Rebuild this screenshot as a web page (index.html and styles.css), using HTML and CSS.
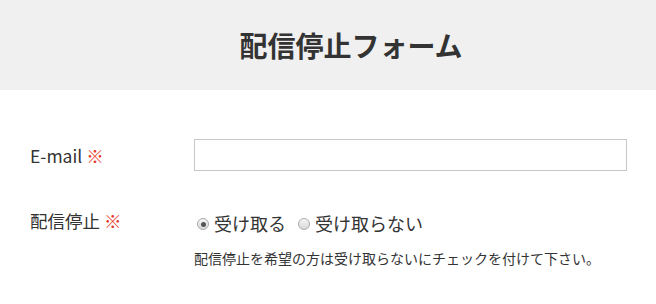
FILE: index.html
```html
<!DOCTYPE html>
<html lang="ja">
<head>
    <meta charset="UTF-8">
    <meta name="viewport" content="width=device-width, initial-scale=1.0">
    <title>配信停止フォーム</title>
    <link rel="stylesheet" href="styles.css">
</head>
<body>
    <div class="page-header">
        <h1>配信停止フォーム</h1>
    </div>
    <form class="form">
        <div class="form-row">
            <label class="form-label" for="email">E-mail <span class="required">※</span></label>
            <div class="form-field">
                <input type="text" id="email" class="text-input">
            </div>
        </div>
        <div class="form-row form-row-top">
            <div class="form-label">配信停止 <span class="required">※</span></div>
            <div class="form-field">
                <div class="radio-group">
                    <label class="radio-item"><input type="radio" name="stop" checked> 受け取る</label>
                    <label class="radio-item"><input type="radio" name="stop"> 受け取らない</label>
                </div>
                <p class="note">配信停止を希望の方は受け取らないにチェックを付けて下さい。</p>
            </div>
        </div>
    </form>
</body>
</html>
```

FILE: styles.css
```css
body {
    font-family: "Noto Sans CJK JP", "Noto Sans", sans-serif;
    margin: 0;
    padding: 0;
    color: #333;
    background: #fff;
}
.page-header {
    background: #f0f0f0;
    height: 90px;
    display: flex;
    align-items: center;
    justify-content: center;
    padding-left: 46px;
}
.page-header h1 {
    margin: 0;
    font-size: 28px;
    font-weight: bold;
    color: #333;
}
.form {
    padding: 49px 29px 0 30px;
}
.form-row {
    display: flex;
    align-items: center;
    margin-bottom: 36px;
}
.form-row-top {
    align-items: flex-start;
}
.form-label {
    width: 164px;
    flex-shrink: 0;
    font-size: 17.5px;
    line-height: 27px;
}
.required {
    color: #e8352a;
}
.form-field {
    flex: 1;
}
.text-input {
    display: block;
    width: 100%;
    height: 32px;
    box-sizing: border-box;
    border: 1px solid #c8c8c8;
    margin: 0;
}
.radio-group {
    display: flex;
    gap: 9px;
    font-size: 18px;
    line-height: 27px;
    padding-top: 3px;
}
.radio-item {
    display: flex;
    align-items: center;
}
.radio-item input {
    appearance: none;
    -webkit-appearance: none;
    box-sizing: border-box;
    width: 12px;
    height: 12px;
    margin: 1px 5px 0 3px;
    border: 1px solid #aaa;
    border-radius: 50%;
    background: linear-gradient(#f6f6f6, #d8d8d8);
    position: relative;
}
.radio-item input:checked::after {
    content: "";
    position: absolute;
    top: 2.5px;
    left: 2.5px;
    width: 5px;
    height: 5px;
    border-radius: 50%;
    background: #555;
}
.note {
    font-size: 14px;
    margin: 11px 0 0;
}
```
